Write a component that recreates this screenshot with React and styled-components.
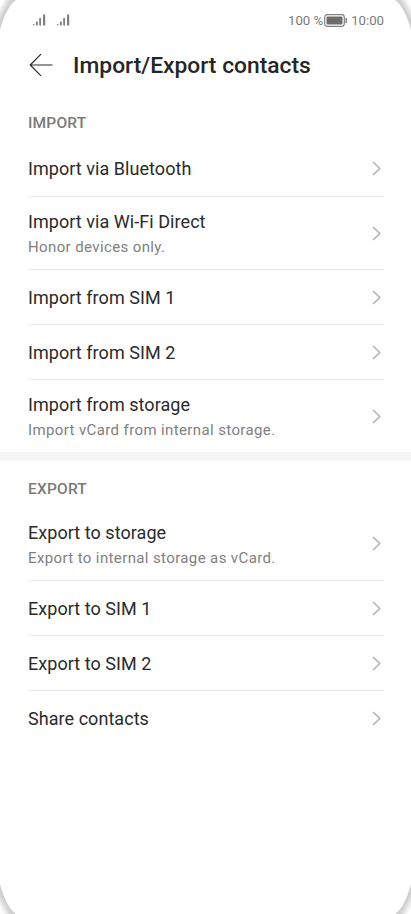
import React from 'react'
import styled, { createGlobalStyle } from 'styled-components'

const GlobalStyle = createGlobalStyle`
  * { box-sizing: border-box; }
  body {
    margin: 0;
    background: #fff;
    font-family: Roboto, "Liberation Sans", sans-serif;
  }
`

const Screen = styled.div`
  position: relative;
  width: 411px;
  height: 914px;
  overflow: hidden;
  background: #fff;
`

const Corner = styled.svg`
  position: absolute;
  width: 16px;
  height: 30px;
  ${p => (p.$bottom ? 'bottom: 0;' : 'top: 0;')}
  ${p => (p.$right ? 'right: 0;' : 'left: 0;')}
  transform: scale(${p => (p.$right ? -1 : 1)}, ${p => (p.$bottom ? -1 : 1)});
`

const StatusBar = styled.div`
  display: flex;
  justify-content: space-between;
  align-items: center;
  height: 20px;
  margin-top: 10px;
  padding: 0 27px 0 33px;
  color: #7a7a7a;
  font-size: 13.2px;
`

const Signals = styled.div`
  display: flex;
  gap: 10px;
`

const StatusRight = styled.div`
  display: flex;
  align-items: center;
  gap: 1px;
  span:last-child {
    margin-left: 2px;
  }
`

const Header = styled.div`
  display: flex;
  align-items: center;
  height: 48px;
  margin-top: 11px;
  padding-left: 29px;
  gap: 20px;
`

const Title = styled.h1`
  margin: 0;
  font-size: 22.8px;
  font-weight: 500;
  color: #262626;
`

const SectionLabel = styled.div`
  padding: ${p => (p.$first ? '24px' : '18px')} 28px 0;
  height: ${p => (p.$first ? '52px' : '46px')};
  font-size: 15.5px;
  font-weight: 500;
  line-height: 20px;
  letter-spacing: 0.2px;
  color: #7a7a7a;
`

const List = styled.div`
  padding: 0 27px 0 28px;
`

const Row = styled.div`
  display: flex;
  align-items: center;
  justify-content: space-between;
  height: ${p => (p.$tall ? 73 : 55)}px;
  border-top: ${p => (p.$first ? 'none' : '1px solid #ebebeb')};
  padding-right: 3px;
`

const RowText = styled.div`
  display: flex;
  flex-direction: column;
  padding-top: 1px;
`

const RowTitle = styled.div`
  font-size: 18px;
  line-height: 24px;
  letter-spacing: 0.05px;
  color: #2a2a2a;
`

const RowSub = styled.div`
  margin-top: 3px;
  font-size: 15px;
  line-height: 20px;
  letter-spacing: 0.38px;
  color: #808080;
`

const Gap = styled.div`
  height: 9px;
  background: #f5f5f5;
`

const Signal = () => (
  <svg width="14" height="13" viewBox="0 0 14 13" fill="#808080">
    <rect x="0" y="10" width="1.3" height="1.5" />
    <rect x="3" y="7.5" width="1.8" height="4" />
    <rect x="6.2" y="4" width="1.8" height="7.5" />
    <rect x="10" y="0.5" width="2.2" height="11" />
  </svg>
)

const Battery = () => (
  <svg width="24" height="13" viewBox="0 0 24 13">
    <rect x="0.7" y="0.7" width="19.6" height="11.6" rx="2.5" fill="none" stroke="#808080" strokeWidth="1.2" />
    <rect x="2.5" y="2.5" width="16" height="8" rx="1" fill="#6c6c6c" />
    <rect x="21.5" y="4" width="1.5" height="5" fill="#808080" />
  </svg>
)

const BackArrow = () => (
  <svg width="24" height="24" viewBox="0 0 24 24" fill="none" stroke="#2a2a2a" strokeWidth="1.2">
    <path d="M23.5 12H1.5M12 1.2L1.2 12L12 22.8" />
  </svg>
)

const Chevron = () => (
  <svg width="9" height="15" viewBox="0 0 9 15" fill="none" stroke="#ababab" strokeWidth="1.3">
    <path d="M1 1l6.8 6.5L1 14" />
  </svg>
)

const ListRow = ({ title, sub, first }) => (
  <Row $tall={!!sub} $first={first}>
    <RowText>
      <RowTitle>{title}</RowTitle>
      {sub && <RowSub>{sub}</RowSub>}
    </RowText>
    <Chevron />
  </Row>
)

const CornerShape = ({ right, bottom }) => {
  const id = `corner-${right ? 'r' : 'l'}-${bottom ? 'b' : 't'}`
  return (
    <Corner $right={right} $bottom={bottom} viewBox="0 0 16 30">
      <defs>
        <linearGradient id={id} x1="0" y1="0" x2="1" y2="1">
          <stop offset="0.1" stopColor="#fff" />
          <stop offset="0.36" stopColor="#d0d0d0" />
        </linearGradient>
      </defs>
      <path d="M0 0H16C11 3 4 14 0 30Z" fill={`url(#${id})`} />
    </Corner>
  )
}

export default function App() {
  return (
    <Screen>
      <GlobalStyle />
      <StatusBar>
        <Signals>
          <Signal />
          <Signal />
        </Signals>
        <StatusRight>
          <span>100 %</span>
          <Battery />
          <span>10:00</span>
        </StatusRight>
      </StatusBar>
      <Header>
        <BackArrow />
        <Title>Import/Export contacts</Title>
      </Header>
      <SectionLabel $first>IMPORT</SectionLabel>
      <List>
        <ListRow first title="Import via Bluetooth" />
        <ListRow title="Import via Wi-Fi Direct" sub="Honor devices only." />
        <ListRow title="Import from SIM 1" />
        <ListRow title="Import from SIM 2" />
        <ListRow title="Import from storage" sub="Import vCard from internal storage." />
      </List>
      <Gap />
      <SectionLabel>EXPORT</SectionLabel>
      <List>
        <ListRow first title="Export to storage" sub="Export to internal storage as vCard." />
        <ListRow title="Export to SIM 1" />
        <ListRow title="Export to SIM 2" />
        <ListRow title="Share contacts" />
      </List>
      <CornerShape />
      <CornerShape right />
      <CornerShape bottom />
      <CornerShape right bottom />
    </Screen>
  )
}
